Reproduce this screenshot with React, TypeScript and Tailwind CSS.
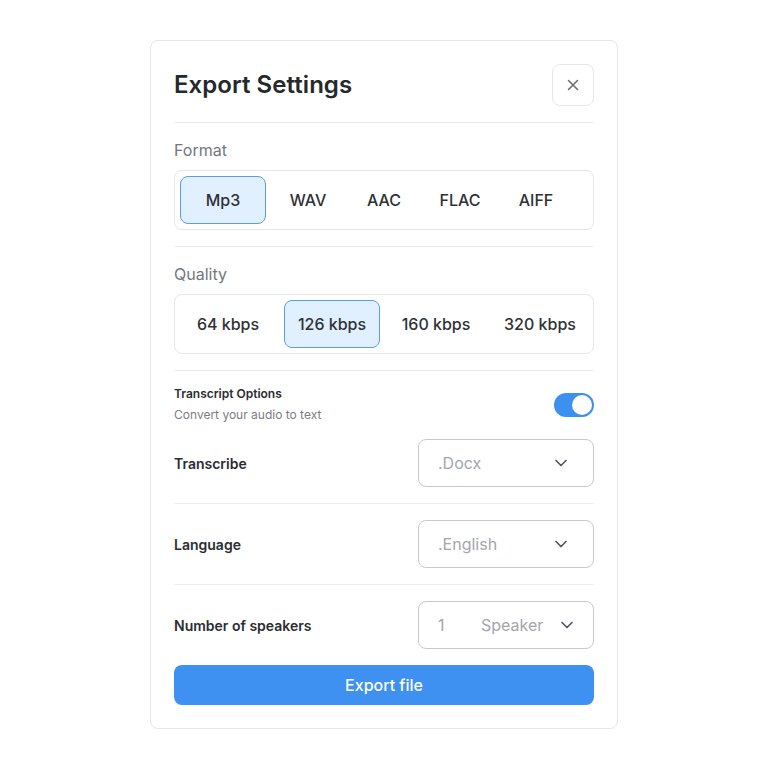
import React, { useState } from 'react';

const FORMATS = [
  { label: 'Mp3', w: 'w-[86px] mr-1' },
  { label: 'WAV', w: 'w-[76px]' },
  { label: 'AAC', w: 'w-[76px]' },
  { label: 'FLAC', w: 'w-[76px]' },
  { label: 'AIFF', w: 'w-[76px]' },
];

const QUALITIES = ['64 kbps', '126 kbps', '160 kbps', '320 kbps'];

const Chevron: React.FC = () => (
  <svg width="20" height="20" viewBox="0 0 24 24" fill="none" stroke="#4b5563" strokeWidth="2" strokeLinecap="round" strokeLinejoin="round">
    <path d="M6 9l6 6 6-6" />
  </svg>
);

const SelectRow: React.FC<{ label: string; children: React.ReactNode; border?: boolean }> = ({ label, children, border }) => (
  <div className={`flex items-center justify-between ${border ? 'border-b border-[#ececec] pb-4 mb-4' : ''}`}>
    <span className="text-[14px] font-semibold text-[#2a2d31]">{label}</span>
    <div className="w-[176px] h-12 rounded-lg border border-[#c9c9c9] flex items-center pl-[19px] pr-[22px] text-[16px] text-[#a3a6ab]">
      {children}
    </div>
  </div>
);

const App: React.FC = () => {
  const [format, setFormat] = useState('Mp3');
  const [quality, setQuality] = useState('126 kbps');
  const [transcript, setTranscript] = useState(true);

  return (
    <div className="min-h-[769px] bg-white flex justify-center items-start pt-10" style={{ fontFamily: 'Inter, "Noto Sans", sans-serif' }}>
      <div className="w-[468px] rounded-lg border border-[#e6e6e6] px-[23px] pt-[23px] pb-[23px] flex flex-col">
        <div className="flex items-center justify-between pb-4 border-b border-[#ececec]">
          <h1 className="text-[24px] font-semibold text-[#25282c] tracking-[0.05px]">Export Settings</h1>
          <button className="w-[42px] h-[42px] rounded-lg border border-[#e6e6e6] flex items-center justify-center">
            <svg width="14" height="14" viewBox="0 0 14 14" stroke="#6b6e73" strokeWidth="1.6" strokeLinecap="round">
              <path d="M2.5 2.5l9 9M11.5 2.5l-9 9" />
            </svg>
          </button>
        </div>

        <div className="pt-[17px] pb-4 border-b border-[#ececec]">
          <div className="text-[16px] text-[#74777c] leading-5 mb-[10px]">Format</div>
          <div className="h-[60px] rounded-lg border border-[#e6e6e6] p-[5px] flex">
            {FORMATS.map((f) => (
              <button
                key={f.label}
                onClick={() => setFormat(f.label)}
                className={`${f.w} h-12 rounded-lg text-[16px] font-medium text-[#2e3135] border ${
                  format === f.label ? 'bg-[#e1f0fe] border-[#5a9de0]' : 'border-transparent'
                }`}
              >
                {f.label}
              </button>
            ))}
          </div>
        </div>

        <div className="pt-[17px] pb-4 border-b border-[#ececec]">
          <div className="text-[16px] text-[#74777c] leading-5 mb-[10px]">Quality</div>
          <div className="h-[60px] rounded-lg border border-[#e6e6e6] p-[5px] grid grid-cols-4 gap-2">
            {QUALITIES.map((q) => (
              <button
                key={q}
                onClick={() => setQuality(q)}
                className={`h-12 rounded-lg text-[16px] font-medium text-[#2e3135] border ${
                  quality === q ? 'bg-[#e1f0fe] border-[#5a9de0]' : 'border-transparent'
                }`}
              >
                {q}
              </button>
            ))}
          </div>
        </div>

        <div className="pt-[15px] flex items-center justify-between">
          <div>
            <div className="text-[12px] font-semibold text-[#2a2d31] leading-4">Transcript Options</div>
            <div className="text-[12px] text-[#7a7d82] leading-4 mt-[5px]">Convert your audio to text</div>
          </div>
          <button
            onClick={() => setTranscript(!transcript)}
            className={`w-10 h-6 rounded-full flex items-center px-[2px] ${transcript ? 'bg-[#3d8ff0] justify-end' : 'bg-[#d1d5db] justify-start'}`}
          >
            <span className="w-5 h-5 rounded-full bg-white" />
          </button>
        </div>

        <div className="mt-4">
          <SelectRow label="Transcribe" border>
            <span className="flex-1">.Docx</span>
            <Chevron />
          </SelectRow>
          <SelectRow label="Language" border>
            <span className="flex-1">.English</span>
            <Chevron />
          </SelectRow>
          <SelectRow label="Number of speakers">
            <span className="w-[43px]">1</span>
            <span className="flex-1">Speaker</span>
            <span className="-mr-1.5"><Chevron /></span>
          </SelectRow>
        </div>

        <button className="mt-4 h-10 w-full shrink-0 rounded-lg bg-[#3e91f1] text-white text-[16px] font-medium">
          Export file
        </button>
      </div>
    </div>
  );
};

export default App;
